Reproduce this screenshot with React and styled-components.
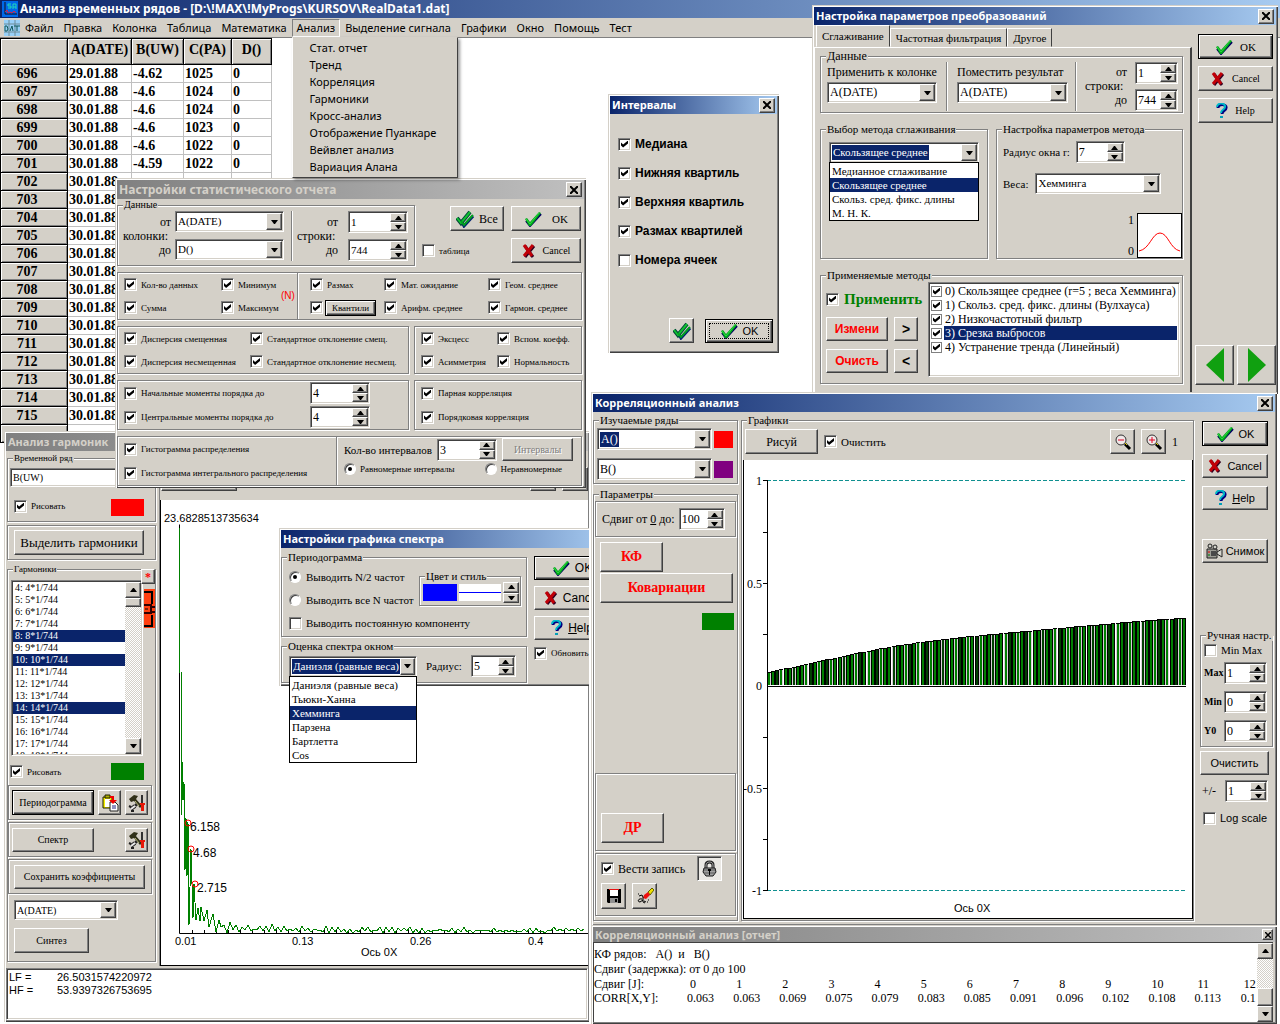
import React from 'react'
import styled, { css, createGlobalStyle } from 'styled-components'

const face = '#d4d0c8'
const shade = '#808080'
const dark = '#404040'
const navy = '#0a246a'
const serif = '"Liberation Serif", "Times New Roman", serif'
const sans = '"Liberation Sans", Arial, sans-serif'
const ui = '"Noto Sans", Tahoma, sans-serif'

const raised = css`
  border: 1px solid;
  border-color: #fff ${dark} ${dark} #fff;
  box-shadow: inset -1px -1px 0 ${shade};
`
const sunken = css`
  border: 1px solid;
  border-color: ${shade} #fff #fff ${shade};
  box-shadow: inset 1px 1px 0 ${dark}, inset -1px -1px 0 ${face};
`
const etched = css`
  border: 1px solid ${shade};
  box-shadow: 1px 1px 0 #fff, inset 1px 1px 0 #fff;
`

const GlobalStyle = createGlobalStyle`
  * { box-sizing: border-box; }
  body {
    margin: 0;
    overflow: hidden;
    background: #fff;
    color: #000;
    font: 12px/14px ${serif};
  }
  button, input, select { margin: 0; padding: 0; font: inherit; color: inherit; }
  ul { margin: 0; padding: 0; list-style: none; }
  svg { display: block; flex: none; }
`

/* ---------- icons ---------- */

const CheckIcon = () =>
  <svg width='18' height='16' viewBox='0 0 18 16' aria-hidden='true'>
    <path d='M2 10l4 5L17 3' fill='none' stroke='#000060' strokeWidth='2' />
    <path d='M1 8l2-1 3 4L15 1l2 1L7 15H5z' fill='#00a818' />
    <path d='M2 8l4 5L15 2' fill='none' stroke='#30d848' strokeWidth='1' />
  </svg>

const DoubleCheckIcon = () =>
  <svg width='18' height='18' viewBox='0 0 18 18' aria-hidden='true'>
    <path d='M5 10l3 6L17 6' fill='none' stroke='#002070' strokeWidth='3' />
    <path d='M1 8l4 5L14 2' fill='none' stroke='#004838' strokeWidth='4' />
    <path d='M1 8l4 5L14 2' fill='none' stroke='#10c030' strokeWidth='2' />
    <path d='M5 11l3 4 9-10' fill='none' stroke='#00a020' strokeWidth='2' />
  </svg>

const CrossIcon = () =>
  <svg width='14' height='14' viewBox='0 0 14 14' aria-hidden='true'>
    <path d='M3 2l8 11M12 2L3 13' fill='none' stroke='#300020' strokeWidth='3' />
    <path d='M2 1l8 11M11 1L2 12' fill='none' stroke='#c00008' strokeWidth='3' />
  </svg>

const HelpIcon = () =>
  <svg width='12' height='16' viewBox='0 0 12 16' aria-hidden='true'>
    <path d='M2 5c0-5 9-4 8 0 0 3-4 2-4 6' fill='none' stroke='#000080' strokeWidth='3' />
    <path d='M1 4c0-5 9-4 8 0 0 3-4 2-4 6' fill='none' stroke='#00b8c8' strokeWidth='2' />
    <path d='M4 13h3v2H4z' fill='#00a0b8' />
  </svg>

const CloseIcon = ({ size = 8 }) =>
  <svg width={size} height={size} viewBox='0 0 8 8' aria-hidden='true'>
    <path d='M0 0l8 8M8 0L0 8' stroke='#000' strokeWidth='2' />
  </svg>

const TriangleUp = () =>
  <svg width='7' height='4' viewBox='0 0 7 4' aria-hidden='true'><path d='M0 4L3 0h1l3 4z' /></svg>

const TriangleDown = () =>
  <svg width='7' height='4' viewBox='0 0 7 4' aria-hidden='true'><path d='M0 0h7L4 4H3z' /></svg>

const AppIcon = () =>
  <svg width='16' height='16' viewBox='0 0 16 16' aria-hidden='true'>
    <path d='M0 0h16v16H0z' fill='#0068e8' />
    <path d='M3 1v12h12' fill='none' stroke='#101020' />
    <path d='M3 11l2-2 1 3 2-1 2 1 2-2 2 2' fill='none' stroke='#e02040' />
    <path d='M9 3H6v2h3v2H6M11 8V3h3v5M11 6h3' fill='none' stroke='#20d8b8' />
  </svg>

const DataIcon = () =>
  <svg width='16' height='16' viewBox='0 0 16 16' aria-hidden='true'>
    <path d='M0 0h16v16H0z' fill='#98d0f8' />
    <path d='M5 0v16M11 0v16M0 4h16M0 12h16' stroke='#6c8c98' />
    <path d='M1 6v5h2l1-2-1-3zM6 11l2-5 1 5M10 6h6M13 6v5' fill='none' stroke='#105858' />
  </svg>

const ClipboardIcon = () =>
  <svg width='18' height='18' viewBox='0 0 18 18' aria-hidden='true'>
    <path d='M2 3h9v11H2z' fill='#f8f000' stroke='#202000' />
    <path d='M4 5h5v8H4z' fill='#fff' />
    <path d='M4 1h5v3H4z' fill='#b0b000' stroke='#202000' />
    <path d='M9 8h5l3 3v6H9z' fill='#fff' stroke='#202020' />
    <path d='M11 12h4M11 14h4' stroke='#202080' />
    <path d='M9 2h4v4h3l-4 4-4-4h3V4H9z' fill='#f00000' />
  </svg>

const ToolsIcon = () =>
  <svg width='18' height='18' viewBox='0 0 18 18' aria-hidden='true'>
    <path d='M1 5l5-4 4 1-2 3 6 7-2 2-6-7-3 1z' fill='#303018' />
    <path d='M7 7l4 5' stroke='#b8b878' />
    <path d='M3 15l4-3' stroke='#202020' strokeWidth='4' />
    <path d='M1 12l2 1M3 17l3 0M7 10l2 2' stroke='#202020' strokeWidth='2' />
    <path d='M3 15l4-3' stroke='#e8e8e8' strokeWidth='2' />
    <path d='M14 1v8' stroke='#303030' strokeWidth='2' />
    <path d='M12 9h5v2h-1v6h-3v-6h-1z' fill='#e81808' />
  </svg>

const BracketIcon = () =>
  <svg width='11' height='39' viewBox='0 0 11 39' aria-hidden='true'>
    <path d='M0 0h11v39H0z' fill='#ff4010' />
    <path d='M0 3h8v12M0 37h8V26' fill='none' stroke='#000' strokeWidth='2' />
    <path d='M0 16h7v8H0M7 18h4M7 23h4' fill='none' stroke='#300000' strokeWidth='2' />
    <path d='M1 20h3' stroke='#000' />
  </svg>

const ZoomIcon = ({ plus }) =>
  <svg width='18' height='18' viewBox='0 0 18 18' aria-hidden='true'>
    <circle cx='7' cy='7' r='5' fill='#f0e8e8' stroke='#303030' />
    <path d='M11 11l5 5' stroke='#000' strokeWidth='3' />
    <path d='M11 10l2 2' stroke='#e0d000' strokeWidth='1' />
    <path d={plus ? 'M4 7h6M7 4v6' : 'M4 7h6'} stroke='#e00020' strokeWidth='1' />
  </svg>

const CameraIcon = () =>
  <svg width='17' height='16' viewBox='0 0 17 16' aria-hidden='true'>
    <path d='M1 6h10v9H1z' fill='#9c9c94' stroke='#202020' />
    <path d='M11 9l5-3v8l-5-3z' fill='#d8d8d0' stroke='#202020' />
    <circle cx='4' cy='3' r='2' fill='#d0d0c8' stroke='#202020' />
    <circle cx='9' cy='4' r='2' fill='#d0d0c8' stroke='#202020' />
    <path d='M5 8h5v5H5z' fill='#484848' />
    <path d='M2 9h2' stroke='#e00000' />
    <path d='M2 12h2' stroke='#008000' />
  </svg>

const LockIcon = () =>
  <svg width='15' height='17' viewBox='0 0 15 17' aria-hidden='true'>
    <path d='M4 8V5c0-4 7-4 7 0v3' fill='none' stroke='#202020' strokeWidth='3' />
    <path d='M4 8V5c0-4 7-4 7 0v3' fill='none' stroke='#a8a8a8' strokeWidth='1' />
    <path d='M2 8h11l1 4-3 4H4l-3-4z' fill='#a0a0a0' stroke='#181818' />
    <path d='M2 10h11M2 13h11' stroke='#585858' />
    <path d='M6 9h3v2H8v4H7v-4H6z' fill='#000' />
  </svg>

const DiskIcon = () =>
  <svg width='16' height='16' viewBox='0 0 16 16' aria-hidden='true'>
    <path d='M1 1h14v14H2l-1-1z' fill='#000' />
    <path d='M4 1h8v7H4z' fill='#fff' />
    <path d='M3 1h10v1H3z' fill='#e81010' />
    <path d='M4 10h8v5H4z' fill='#909090' />
    <path d='M9 11h2v3H9z' fill='#000' />
  </svg>

const EraserIcon = () =>
  <svg width='18' height='18' viewBox='0 0 18 18' aria-hidden='true'>
    <path d='M12 5l4-4 2 2-4 5z' fill='#f0e000' stroke='#606000' />
    <path d='M8 8l4-3 2 3-4 4-3-1z' fill='#f01010' />
    <path d='M3 9l3-1 1 2v5l2 1M6 12c-4-1-5 3-2 3l3-2' fill='none' stroke='#000' strokeWidth='1' />
    <path d='M8 14l2 1M11 15h1M2 7h1M12 13h1' stroke='#000' />
  </svg>

/* ---------- shared parts ---------- */

const Window = styled.section`
  position: absolute;
  left: ${p => p.$x}px;
  top: ${p => p.$y}px;
  width: ${p => p.$w}px;
  min-height: ${p => p.$h || 0}px;
  display: flex;
  flex-direction: column;
  padding: 2px;
  background: ${face};
  box-shadow: inset 1px 1px 0 ${face}, inset 2px 2px 0 #fff, inset -1px -1px 0 ${dark},
    inset -2px -2px 0 ${shade}${p => p.$gutter && ', -2px 0 0 #fff'};
`

const TitleBar = styled.header`
  display: flex;
  align-items: center;
  justify-content: space-between;
  flex: none;
  height: ${p => p.$h || 18}px;
  padding: 0 2px;
  background: ${p => (p.$inactive
    ? `linear-gradient(90deg, ${shade}, #c0c0c0)`
    : `linear-gradient(90deg, ${navy}, #a6caf0)`)};
  color: ${p => (p.$inactive ? face : '#fff')};
`

const Title = styled.h2`
  margin: 0;
  font: bold ${p => p.$size || 11}px/16px ${ui};
  white-space: nowrap;
`

const CloseButton = styled.button`
  ${raised};
  display: grid;
  place-items: center;
  width: ${p => p.$s || 16}px;
  height: ${p => (p.$s || 15)}px;
  background: ${face};
`

const GroupBox = styled.fieldset`
  ${etched};
  position: relative;
  display: flex;
  flex-direction: column;
  min-width: 0;
  margin: 0;
  padding: 0;
  ${p => p.$w && `width: ${p.$w}px;`}
  ${p => p.$grow && 'flex: 1;'}
`

const GroupBody = styled.div`
  display: flex;
  flex: 1;
  min-width: 0;
  flex-direction: ${p => (p.$col ? 'column' : 'row')};
  padding: ${p => p.$pad || 0};
`

const Legend = styled.legend`
  margin-left: 5px;
  padding: 0 1px;
  background: ${face};
  font-size: ${p => p.$size || 12}px;
  line-height: 12px;
  white-space: nowrap;
`

const Group = ({ legend, size, w, grow, col, pad, children }) =>
  <GroupBox $w={w} $grow={grow}>
    <Legend $size={size}>{legend}</Legend>
    <GroupBody $col={col} $pad={pad}>{children}</GroupBody>
  </GroupBox>

const Panel = styled.div`
  ${etched};
  display: flex;
  padding: ${p => p.$pad || 0};
  align-items: ${p => p.$align || 'stretch'};
  ${p => p.$w && `width: ${p.$w}px;`}
  ${p => p.$h && `height: ${p.$h}px;`}
  ${p => p.$grow && 'flex: 1;'}
`

const Rule = styled.div`
  width: 2px;
  border-left: 1px solid ${shade};
  border-right: 1px solid #fff;
`

const Row = styled.div`
  display: flex;
  align-items: ${p => p.$align || 'center'};
  justify-content: ${p => p.$justify || 'flex-start'};
  gap: ${p => p.$gap || 0}px;
  padding: ${p => p.$pad || 0};
  ${p => p.$grow && 'flex: 1;'}
`

const Column = styled.div`
  display: flex;
  flex-direction: column;
  align-items: ${p => p.$align || 'stretch'};
  gap: ${p => p.$gap || 0}px;
  padding: ${p => p.$pad || 0};
  ${p => p.$w && `width: ${p.$w}px; flex: none;`}
  ${p => p.$grow && 'flex: 1; min-width: 0;'}
`

const Bottom = styled.div`
  display: flex;
  flex-direction: column;
  gap: 2px;
  margin-top: auto;
`

const Button = styled.button`
  ${raised};
  display: inline-flex;
  align-items: center;
  justify-content: center;
  gap: ${p => (p.$gap === undefined ? 5 : p.$gap)}px;
  flex: none;
  width: ${p => p.$w}px;
  height: ${p => p.$h || 24}px;
  background: ${face};
  color: ${p => p.$color || '#000'};
  font: ${p => (p.$bold ? 'bold ' : '')}${p => p.$size || 12}px/14px ${p => p.$font || serif};
  white-space: nowrap;
  ${p => p.$default && `
    border-color: #000;
    box-shadow: inset 1px 1px 0 #fff, inset -1px -1px 0 ${dark}, inset -2px -2px 0 ${shade};
  `}
  ${p => p.$focus && `outline: 1px dotted #000; outline-offset: -5px;`}
  ${p => p.$down && `
    border-color: ${shade} #fff #fff ${shade};
    box-shadow: inset 1px 1px 0 ${dark};
    background: #eae8e4;
  `}
  &:disabled {
    color: ${shade};
    text-shadow: 1px 1px 0 #fff;
  }
`

const Tick = styled.input`
  ${sunken};
  appearance: none;
  flex: none;
  display: grid;
  place-items: center;
  width: ${p => p.$s || 13}px;
  height: ${p => p.$s || 13}px;
  background: #fff;
  ${p => p.$flat && `border: 1px solid ${shade}; box-shadow: none;`}
  &:checked::before {
    content: '';
    width: 7px;
    height: 7px;
    background: #000;
    clip-path: polygon(0 28%, 0 70%, 30% 100%, 100% 42%, 100% 0, 30% 58%);
  }
`

const RadioInput = styled.input`
  appearance: none;
  flex: none;
  display: grid;
  place-items: center;
  width: 12px;
  height: 12px;
  border: 1px solid;
  border-color: ${shade} #fff #fff ${shade};
  border-radius: 50%;
  background: #fff;
  box-shadow: inset 1px 1px 0 ${dark};
  &:checked::before {
    content: '';
    width: 4px;
    height: 4px;
    border-radius: 50%;
    background: #000;
  }
`

const TickLabel = styled.label`
  display: flex;
  align-items: center;
  gap: ${p => p.$gap || 4}px;
  font: ${p => (p.$bold ? 'bold ' : '')}${p => p.$size || 9}px/14px ${p => p.$font || serif};
  color: ${p => p.$color || '#000'};
  white-space: nowrap;
`

const Check = ({ children, off, ...rest }) =>
  <TickLabel {...rest}>
    <Tick type='checkbox' defaultChecked={!off} />
    {children}
  </TickLabel>

const Radio = ({ children, on, name, ...rest }) =>
  <TickLabel {...rest}>
    <RadioInput type='radio' name={name} defaultChecked={on} />
    {children}
  </TickLabel>

const ComboBox = styled.div`
  ${sunken};
  position: relative;
  display: flex;
  align-items: center;
  flex: ${p => (p.$w ? 'none' : 1)};
  width: ${p => (p.$w ? `${p.$w}px` : 'auto')};
  height: ${p => p.$h || 21}px;
  padding: 1px;
  background: #fff;
  font-size: ${p => p.$size || 12}px;
`

const ComboSelect = styled.select`
  appearance: none;
  flex: 1;
  min-width: 0;
  height: 15px;
  padding: 0 1px;
  border: 0;
  outline: 0;
  background: transparent;
  line-height: 15px;
  ${p => p.$marked && `
    flex: none;
    field-sizing: content;
    margin-left: 1px;
    padding: 0 1px;
    background: ${navy};
    color: #fff;
  `}
`

const ComboArrow = styled.span`
  ${raised};
  display: grid;
  place-items: center;
  align-self: stretch;
  width: 16px;
  margin-left: auto;
  background: ${face};
  pointer-events: none;
`

const Combo = ({ w, h, size, id, label, value, options = [], marked, children }) =>
  <ComboBox $w={w} $h={h} $size={size}>
    <ComboSelect id={id} aria-label={label} defaultValue={value} $marked={marked}>
      {(options.length ? options : [value]).map(o => <option key={o}>{o}</option>)}
    </ComboSelect>
    <ComboArrow><TriangleDown /></ComboArrow>
    {children}
  </ComboBox>

const DropList = styled.ul`
  position: absolute;
  z-index: 2;
  left: -1px;
  right: -1px;
  top: 100%;
  padding: 1px 0 0;
  border: 1px solid #000;
  background: #fff;
`

const DropItem = styled.li`
  height: 14px;
  padding: 0 2px;
  line-height: 14px;
  white-space: nowrap;
  ${p => p.$on && `background: ${navy}; color: #fff;`}
`

const Options = ({ items, current }) =>
  <DropList role='listbox'>
    {items.map(i =>
      <DropItem key={i} role='option' aria-selected={i === current} $on={i === current}>{i}</DropItem>
    )}
  </DropList>

const SpinBox = styled.div`
  ${sunken};
  display: flex;
  flex: none;
  width: ${p => p.$w || 60}px;
  height: 22px;
  padding: 1px;
  background: #fff;
`

const SpinInput = styled.input`
  flex: 1;
  min-width: 0;
  width: 0;
  padding-left: 1px;
  border: 0;
  outline: 0;
  background: transparent;
  font-size: ${p => p.$size || 12}px;
`

const Arrows = styled.div`
  display: grid;
  grid-template-rows: 1fr 1fr;
  width: 16px;
  height: ${p => (p.$h ? `${p.$h}px` : 'auto')};
`

const ArrowButton = styled.button`
  ${raised};
  display: grid;
  place-items: center;
  min-height: 0;
  background: ${face};
`

const SpinArrows = ({ h }) =>
  <Arrows $h={h}>
    <ArrowButton aria-label='Больше'><TriangleUp /></ArrowButton>
    <ArrowButton aria-label='Меньше'><TriangleDown /></ArrowButton>
  </Arrows>

const Spin = ({ w, id, label, value, size }) =>
  <SpinBox $w={w}>
    <SpinInput id={id} aria-label={label} defaultValue={value} $size={size} />
    <SpinArrows />
  </SpinBox>

const RangeLabels = styled.div`
  display: flex;
  flex-direction: column;
  padding-top: ${p => p.$top || 0}px;
  width: ${p => p.$w}px;
  line-height: 14px;
  label { text-align: right; }
`

const Range = ({ id, title, w, top }) =>
  <RangeLabels $w={w} $top={top}>
    <label htmlFor={`${id}-from`}>от</label>
    <span>{title}</span>
    <label htmlFor={`${id}-to`}>до</label>
  </RangeLabels>

const Swatch = styled.button`
  flex: none;
  width: ${p => p.$w || 33}px;
  height: 17px;
  border: 0;
  background: ${p => p.$color};
`

const ScrollBar = styled.div`
  display: flex;
  flex-direction: column;
  flex: none;
  width: 16px;
  background: repeating-conic-gradient(#fff 0 25%, ${face} 0 50%) 0 0 / 2px 2px;
`

const ScrollButton = styled.button`
  ${raised};
  display: grid;
  place-items: center;
  flex: none;
  height: ${p => p.$h || 16}px;
  margin-top: ${p => (p.$end ? 'auto' : 0)};
  background: ${face};
`

const ChartText = styled.text`
  font: ${p => p.$size || 11}px ${p => p.$font || sans};
`

/* ---------- main window ---------- */

const Desktop = styled.main`
  position: relative;
  height: 100vh;
  overflow: hidden;
  background: #fff;
`

const AppTitle = styled(TitleBar)`
  justify-content: flex-start;
  gap: 2px;
`

const MenuBar = styled.nav`
  position: relative;
  display: flex;
  align-items: center;
  height: 20px;
  padding-left: 4px;
  border-bottom: 1px solid ${shade};
  background: ${face};
  font: 11px/14px ${ui};
`

const MenuItem = styled.div`
  position: relative;
`

const MenuButton = styled.button`
  height: 18px;
  padding: 0 4px;
  border: 1px solid;
  border-color: ${p => (p.$open ? `${shade} #fff #fff ${shade}` : 'transparent')};
  background: transparent;
  white-space: nowrap;
`

const Popup = styled.ul`
  position: absolute;
  z-index: 1;
  left: 0;
  top: 100%;
  width: 166px;
  padding: 1px 2px 2px;
  background: ${face};
  border: 1px solid;
  border-color: ${face} ${dark} ${dark} #fff;
  box-shadow: 2px 2px 3px rgba(0, 0, 0, 0.4);
  li {
    height: 17px;
    padding-left: 15px;
    line-height: 17px;
    white-space: nowrap;
  }
`

const menus = [
  'Файл', 'Правка', 'Колонка', 'Таблица', 'Математика', 'Анализ',
  'Выделение сигнала', 'Графики', 'Окно', 'Помощь', 'Тест',
]
const analysis = [
  'Стат. отчет', 'Тренд', 'Корреляция', 'Гармоники', 'Кросс-анализ',
  'Отображение Пуанкаре', 'Вейвлет анализ', 'Вариация Алана',
]

const Sheet = styled.table`
  table-layout: fixed;
  width: 271px;
  border-collapse: collapse;
  font: bold 14px/16px ${serif};
  th {
    border: 1px solid #000;
    background: ${face};
    box-shadow: inset 1px 1px 0 #fff, inset -1px -1px 0 ${shade};
    padding: 0 0 3px;
  }
  thead th { height: 26px; }
  tbody th {
    height: 18px;
    padding: 0 14px 0 0;
  }
  td {
    height: 18px;
    padding: 0 1px;
    border: 1px solid #c0c0c0;
    overflow: hidden;
    white-space: nowrap;
  }
`

const readings = [
  ['29.01.88', '-4.62', '1025'],
  ['30.01.88', '-4.6', '1024'],
  ['30.01.88', '-4.6', '1024'],
  ['30.01.88', '-4.6', '1023'],
  ['30.01.88', '-4.6', '1022'],
  ['30.01.88', '-4.59', '1022'],
]

const DataSheet = () =>
  <Sheet>
    <colgroup>
      <col width='67' /><col width='64' /><col width='52' /><col width='48' /><col width='40' />
    </colgroup>
    <thead>
      <tr><th /><th>A(DATE)</th><th>B(UW)</th><th>C(PA)</th><th>D()</th></tr>
    </thead>
    <tbody>
      {Array.from({ length: 20 }, (_, i) => {
        const [date, uw, pa] = readings[i] || ['30.01.88', '', '']
        return (
          <tr key={i}>
            <th scope='row'>{696 + i}</th><td>{date}</td><td>{uw}</td><td>{pa}</td><td>{uw && '0'}</td>
          </tr>
        )
      })}
      <tr><th /><td /><td /><td /><td /></tr>
    </tbody>
  </Sheet>

/* ---------- statistics dialog ---------- */

const CheckGrid = styled.div`
  display: grid;
  grid-template-columns: ${p => p.$cols};
  grid-template-rows: 1fr 1fr;
  align-items: center;
  padding-left: ${p => p.$left || 6}px;
  ${p => p.$grow && 'flex: 1;'}
`

const CountMark = styled.span`
  grid-column: 3;
  grid-row: 1 / 3;
  color: #f00;
  font: 10px/12px ${sans};
`

const ActionGrid = styled.div`
  display: grid;
  grid-template-columns: 1fr 70px;
  flex: 1;
  gap: 7px;
  padding: 7px 1px 0 7px;
  align-content: start;
  align-items: center;
`

const SmallLabel = styled.label`
  font-size: 11px;
`

const StatDialog = () =>
  <Window $x={115} $y={178} $w={471} $h={310}>
    <TitleBar $inactive $h={19}>
      <Title $size={12}>Настройки статистического отчета</Title>
      <CloseButton aria-label='Закрыть'><CloseIcon /></CloseButton>
    </TitleBar>
    <Column $gap={6} $pad='0 2px 0 0'>
      <Row $align='stretch'>
        <Group legend='Данные' size={10} w={298} pad='0 0 4px 5px'>
          <Range id='col' title='колонки:' w={48} top={4} />
          <Column $gap={7} $w={120} $pad='0 7px 0 4px'>
            <Row><Combo id='col-from' value='A(DATE)' size={11} /></Row>
            <Row><Combo id='col-to' value='D()' size={11} /></Row>
          </Column>
          <Rule />
          <Column $pad='0 0 0 4px'><Range id='row' title='строки:' w={41} top={4} /></Column>
          <Column $gap={6} $pad='0 0 0 10px'>
            <Spin id='row-from' value='1' size={11} />
            <Spin id='row-to' value='744' size={11} />
          </Column>
        </Group>
        <ActionGrid>
          <Row $justify='flex-end'><Button $w={54} $h={25}><DoubleCheckIcon />Все</Button></Row>
          <Button $w={70} $h={25} $size={11} $gap={10}><CheckIcon />OK</Button>
          <Check off>таблица</Check>
          <Button $w={70} $h={25} $size={10} $gap={7}><CrossIcon />Cancel</Button>
        </ActionGrid>
      </Row>
      <Panel $h={48}>
        <CheckGrid $cols='97px 60px 16px'>
          <Check>Кол-во данных</Check>
          <Check>Минимум</Check>
          <CountMark>(N)</CountMark>
          <Check>Сумма</Check>
          <Check>Максимум</Check>
        </CheckGrid>
        <Rule />
        <CheckGrid $cols='74px 104px 1fr' $left={11} $grow>
          <Check>Размах</Check>
          <Check>Мат. ожидание</Check>
          <Check>Геом. среднее</Check>
          <Row $gap={2}>
            <Tick type='checkbox' defaultChecked aria-label='Квантили' />
            <Button $default $w={51} $h={16} $size={9}>Квантили</Button>
          </Row>
          <Check>Арифм. среднее</Check>
          <Check>Гармон. среднее</Check>
        </CheckGrid>
      </Panel>
      <Row $gap={5}>
        <Panel $w={292} $h={48}>
          <CheckGrid $cols='126px 1fr' $grow>
            <Check>Дисперсия смещенная</Check>
            <Check>Стандартное отклонение смещ.</Check>
            <Check>Дисперсия несмещенная</Check>
            <Check>Стандартное отклонение несмещ.</Check>
          </CheckGrid>
        </Panel>
        <Panel $grow $h={48}>
          <CheckGrid $cols='76px 1fr' $grow>
            <Check>Эксцесс</Check>
            <Check>Вспом. коефф.</Check>
            <Check>Асимметрия</Check>
            <Check>Нормальность</Check>
          </CheckGrid>
        </Panel>
      </Row>
      <Row $gap={5}>
        <Panel $w={292} $h={50}>
          <CheckGrid $cols='186px 1fr' $grow>
            <Check>Начальные моменты порядка до</Check>
            <Spin label='Начальные моменты' value='4' />
            <Check>Центральные моменты порядка до</Check>
            <Spin label='Центральные моменты' value='4' />
          </CheckGrid>
        </Panel>
        <Panel $grow $h={50}>
          <CheckGrid $cols='1fr' $grow>
            <Check>Парная корреляция</Check>
            <Check>Порядковая корреляция</Check>
          </CheckGrid>
        </Panel>
      </Row>
      <Panel $h={50}>
        <CheckGrid $cols='212px'>
          <Check>Гистограмма распределения</Check>
          <Check>Гистограмма интегрального распределения</Check>
        </CheckGrid>
        <Rule />
        <Column $grow $gap={1} $pad='1px 8px 0 6px'>
          <Row $justify='space-between'>
            <SmallLabel htmlFor='intervals'>Кол-во интервалов</SmallLabel>
            <Spin id='intervals' value='3' />
            <Button $w={71} $h={23} $size={10} disabled>Интервалы</Button>
          </Row>
          <Row $gap={30}>
            <Radio name='step' on>Равномерные интервалы</Radio>
            <Radio name='step'>Неравномерные</Radio>
          </Row>
        </Column>
      </Panel>
    </Column>
  </Window>

/* ---------- intervals dialog ---------- */

const IntervalsDialog = () =>
  <Window $x={608} $y={94} $w={171} $h={259}>
    <TitleBar>
      <Title>Интервалы</Title>
      <CloseButton aria-label='Закрыть'><CloseIcon /></CloseButton>
    </TitleBar>
    <Column $gap={15} $pad='23px 0 0 8px'>
      {['Медиана', 'Нижняя квартиль', 'Верхняя квартиль', 'Размах квартилей'].map(t =>
        <Check key={t} $bold $size={12} $font={sans}>{t}</Check>
      )}
      <Check off $bold $size={12} $font={sans}>Номера ячеек</Check>
    </Column>
    <Bottom>
      <Row $gap={11} $justify='flex-end' $pad='0 4px 8px 0'>
        <Button $w={25} $h={25} aria-label='Отметить все'><DoubleCheckIcon /></Button>
        <Button $default $focus $w={68} $h={24} $size={11} $font={sans}><CheckIcon />OK</Button>
      </Row>
    </Bottom>
  </Window>

/* ---------- transform parameters ---------- */

const TabStrip = styled.div`
  display: flex;
  align-items: flex-end;
  height: 22px;
  padding-left: 2px;
`

const Tab = styled.button`
  height: ${p => (p.$on ? 22 : 19)}px;
  padding: 0 5px;
  border: 1px solid;
  border-color: #fff ${dark} transparent #fff;
  background: ${face};
  font-size: 11px;
  white-space: nowrap;
`

const TabPage = styled.div`
  display: flex;
  flex-direction: column;
  gap: 10px;
  flex: 1;
  padding: 2px 7px 0 5px;
  border-top: 1px solid #fff;
  border-left: 1px solid #fff;
  border-right: 2px solid ${dark};
`

const MethodList = styled.ul`
  ${sunken};
  flex: 1;
  height: 95px;
  margin-top: 1px;
  padding: 1px 2px;
  background: #fff;
  label {
    display: flex;
    align-items: center;
    gap: 2px;
    height: 14px;
    white-space: nowrap;
  }
`

const MethodText = styled.span`
  flex: 1;
  padding-left: 1px;
  ${p => p.$on && `background: ${navy}; color: #fff;`}
`

const methods = [
  '0) Скользящее среднее (r=5 ; веса Хемминга)',
  '1) Скольз. сред. фикс. длины (Вулхауса)',
  '2) Низкочастотный фильтр',
  '3) Срезка выбросов',
  '4) Устранение тренда (Линейный)',
]
const smoothing = ['Медианное сглаживание', 'Скользящее среднее', 'Скольз. сред. фикс. длины', 'М. Н. К.']

const PreviewLabels = styled.div`
  display: flex;
  flex-direction: column;
  justify-content: space-between;
  height: 45px;
`

const Preview = styled.svg`
  border: 1px solid #000;
  background: #fff;
`

const NavRow = styled.div`
  display: flex;
  gap: 3px;
  margin-top: auto;
  padding-bottom: 7px;
`

const ParamsDialog = () =>
  <Window $x={812} $y={5} $w={466} $h={389}>
    <TitleBar>
      <Title>Настройка параметров преобразований</Title>
      <CloseButton aria-label='Закрыть'><CloseIcon /></CloseButton>
    </TitleBar>
    <Row $align='stretch' $grow>
      <Column $w={378}>
        <TabStrip role='tablist'>
          <Tab role='tab' aria-selected='true' $on>Сглаживание</Tab>
          <Tab role='tab'>Частотная фильтрация</Tab>
          <Tab role='tab'>Другое</Tab>
        </TabStrip>
        <TabPage>
          <Group legend='Данные' pad='0 0 1px'>
            <Column $w={125} $gap={3} $pad='3px 9px 0 6px'>
              <label htmlFor='apply-col'>Применить к колонке</label>
              <Combo id='apply-col' w={110} value='A(DATE)' />
            </Column>
            <Rule />
            <Column $w={127} $gap={3} $pad='3px 7px 0 9px'>
              <label htmlFor='result-col'>Поместить результат</label>
              <Combo id='result-col' w={111} value='A(DATE)' />
            </Column>
            <Rule />
            <Column $pad='0 8px'><Range id='line' title='строки:' w={42} top={3} /></Column>
            <Column $gap={5}>
              <Spin w={43} id='line-from' value='1' />
              <Spin w={43} id='line-to' value='744' />
            </Column>
          </Group>
          <Row $gap={8} $align='stretch'>
            <Group legend='Выбор метода сглаживания' size={11} w={168} pad='7px 8px 95px'>
              <Combo label='Метод' value='Скользящее среднее' size={11} options={smoothing} marked>
                <Options items={smoothing} current='Скользящее среднее' />
              </Combo>
            </Group>
            <Group legend='Настройка параметров метода' size={11} grow col pad='6px 0 0 6px'>
              <Row $gap={6}>
                <SmallLabel htmlFor='radius'>Радиус окна r:</SmallLabel>
                <Spin w={49} id='radius' value='7' />
              </Row>
              <Row $gap={7} $pad='10px 21px 0 0'>
                <SmallLabel htmlFor='weight'>Веса:</SmallLabel>
                <Combo id='weight' size={11} value='Хемминга' />
              </Row>
              <Bottom>
                <Row $gap={3} $justify='flex-end'>
                  <PreviewLabels><span>1</span><span>0</span></PreviewLabels>
                  <Preview width='45' height='45' viewBox='0 0 43 43'>
                    <path d='M1 37C12 35 14 19 22 19S32 35 42 37' fill='none' stroke='#f00' />
                  </Preview>
                </Row>
              </Bottom>
            </Group>
          </Row>
          <Group legend='Применяемые методы' size={11} pad='0 2px 6px 5px'>
            <Column $w={102} $gap={8}>
              <Row $pad='11px 0 3px'>
                <Check $bold $size={15} $gap={5} $color='#008000'>Применить</Check>
              </Row>
              <Row $gap={6}>
                <Button $w={62} $h={24} $bold $font={sans} $color='#f00'>Измени</Button>
                <Button $w={24} $h={24} $bold $font={sans} $size={14}>&gt;</Button>
              </Row>
              <Row $gap={6}>
                <Button $w={62} $h={24} $bold $font={sans} $color='#f00'>Очисть</Button>
                <Button $w={24} $h={24} $bold $font={sans} $size={14}>&lt;</Button>
              </Row>
            </Column>
            <MethodList>
              {methods.map((m, i) =>
                <li key={m}>
                  <label>
                    <Tick type='checkbox' $s={11} $flat defaultChecked />
                    <MethodText $on={i === 3}>{m}</MethodText>
                  </label>
                </li>
              )}
            </MethodList>
          </Group>
        </TabPage>
      </Column>
      <Column $grow $gap={7} $align='center' $pad='9px 0 0 3px'>
        <Button $default $w={75} $h={25} $size={11} $gap={7}><CheckIcon />OK</Button>
        <Button $w={75} $h={25} $size={10} $gap={7}><CrossIcon />Cancel</Button>
        <Button $w={75} $h={25} $size={10} $gap={7}><HelpIcon />Help</Button>
        <NavRow>
          <Button $w={39} $h={40} aria-label='Назад'>
            <svg width='18' height='34' viewBox='0 0 18 34'><path d='M18 0v34L0 17z' fill='#10a010' /></svg>
          </Button>
          <Button $w={39} $h={40} aria-label='Вперед'>
            <svg width='18' height='34' viewBox='0 0 18 34'><path d='M0 0v34l18-17z' fill='#10a010' /></svg>
          </Button>
        </NavRow>
      </Column>
    </Row>
  </Window>

/* ---------- harmonics window ---------- */

const StarButton = styled(Button)`
  position: absolute;
  right: 0;
  top: -6px;
`

const HarmonicRow = styled.div`
  display: flex;
  align-items: flex-start;
  gap: 1px;
  padding: 5px 0 0 3px;
  svg { margin-top: 9px; }
  button svg { margin-top: 0; }
`

const HarmonicBox = styled.div`
  ${sunken};
  display: flex;
  width: 132px;
  height: 176px;
  padding: 1px;
  background: #fff;
`

const HarmonicList = styled.ul`
  flex: 1;
  overflow: hidden;
  font-size: 10px;
`

const HarmonicItem = styled.li`
  height: 12px;
  padding-left: 2px;
  line-height: 12px;
  ${p => p.$on && `background: ${navy}; color: #fff;`}
`

const SideToolbar = styled.div`
  display: flex;
  align-items: flex-end;
  gap: 6px;
  height: 49px;
  padding: 0 0 9px 1px;
  button:first-child { margin-right: auto; }
`

const ChartPane = styled.div`
  display: flex;
  flex-direction: column;
  flex: 1;
  min-width: 0;
  border-left: 1px solid ${shade};
`

const ChartCanvas = styled.div`
  flex: 1;
  border-left: 1px solid #000;
  border-bottom: 1px solid #000;
  background: #fff;
  overflow: hidden;
`

const Memo = styled.dl`
  ${sunken};
  display: grid;
  grid-template-columns: 48px 1fr;
  align-content: start;
  height: 52px;
  margin: 2px 0 0;
  padding: 2px;
  background: #fff;
  font: 11px/13px ${sans};
  dd { margin: 0; }
`

// head of the spectrum, then a decaying tail
const spectrumHead = [
  [20, 172], [20, 315], [21, 262], [22, 300], [23, 282], [24, 370], [25, 318], [26, 376], [27, 322],
  [28, 425], [30, 349], [32, 418], [33, 384], [35, 420], [37, 408], [39, 421], [40, 407],
  [43, 421], [46, 410], [48, 427], [52, 414], [55, 432], [58, 420], [60, 427], [63, 425],
]
const spectrumTail = Array.from({ length: 120 }, (_, i) => {
  const lift = 6 + 6 * Math.exp(-i / 20)
  const noise = Math.abs(Math.sin(i * 12.9898) * 43.5453) % 1
  return [66 + i * 3, Math.round(433 - (i % 2 ? lift * (0.4 + noise * 0.6) : lift * noise * 0.4))]
})
const spectrum = [...spectrumHead, ...spectrumTail].map(p => p.join(',')).join(' ')
const peaks = [[27, 323, '6.158'], [30, 349, '4.68'], [34, 384, '2.715']]
const marked = [8, 10, 14]

const SpectrumChart = () =>
  <svg width='428' height='461' viewBox='0 0 428 461'>
    <path d='M18 25v409h410' fill='none' stroke='#000' transform='translate(.5 -.5)' />
    {Array.from({ length: 34 }, (_, i) =>
      <path key={i} d={`M${31 + i * 12} 430v4`} stroke='#000' shapeRendering='crispEdges' />
    )}
    <path d='M18 28h1v145h-1z' fill='#008000' />
    <polyline points={spectrum} fill='none' stroke='#008000' shapeRendering='crispEdges' />
    {peaks.map(([x, y, t]) =>
      <g key={t}>
        <circle cx={x} cy={y} r='3' fill='none' stroke='#f00' />
        <ChartText $size={12} x={x + 2} y={y + 8}>{t}</ChartText>
      </g>
    )}
    <ChartText x='3' y='22'>23.6828513735634</ChartText>
    {[[14, '0.01'], [131, '0.13'], [249, '0.26'], [367, '0.4']].map(([x, t]) =>
      <ChartText key={t} x={x} y='445'>{t}</ChartText>
    )}
    <ChartText x='200' y='456'>Ось 0X</ChartText>
  </svg>

const HarmonicsWindow = () =>
  <Window $x={4} $y={431} $w={586} $h={591}>
    <TitleBar $inactive><Title>Анализ гармоник</Title></TitleBar>
    <Row $align='stretch' $grow>
      <Column $w={150} $gap={3} $pad='1px 0 0 1px'>
        <Group legend='Временной ряд' size={9} col pad='4px 11px 5px 2px'>
          <Row><Combo label='Временной ряд' h={19} size={10} value='B(UW)' /></Row>
          <Row $justify='space-between' $align='flex-start' $pad='12px 0 0 4px'>
            <Check>Рисовать</Check>
            <Swatch $color='#f00' aria-label='Цвет ряда' />
          </Row>
        </Group>
        <Panel $pad='4px 6px' $h={35}>
          <Button $w={130} $h={25} $size={13}>Выделить гармоники</Button>
        </Panel>
        <Group legend='Гармоники' size={9} col>
          <StarButton $w={14} $h={15} $bold $color='#f00'>*</StarButton>
          <HarmonicRow>
            <HarmonicBox>
              <HarmonicList role='listbox' aria-label='Гармоники'>
                {Array.from({ length: 15 }, (_, i) => i + 4).map(n =>
                  <HarmonicItem key={n} role='option' $on={marked.includes(n)}>{`${n}: ${n}*1/744`}</HarmonicItem>
                )}
              </HarmonicList>
              <ScrollBar>
                <ScrollButton aria-label='Вверх'><TriangleUp /></ScrollButton>
                <ScrollButton $h={9} aria-label='Ползунок' />
                <ScrollButton $end aria-label='Вниз'><TriangleDown /></ScrollButton>
              </ScrollBar>
            </HarmonicBox>
            <BracketIcon />
          </HarmonicRow>
          <Row $justify='space-between' $pad='7px 11px 5px 2px'>
            <Check>Рисовать</Check>
            <Swatch $color='#008000' aria-label='Цвет гармоник' />
          </Row>
          <Column $w={144} $gap={2}>
            <Panel $h={35} $align='center' $pad='0 3px'>
              <Row $gap={4}>
                <Button $default $w={82} $h={25} $size={10}>Периодограмма</Button>
                <Button $w={23} $h={25} aria-label='Копировать'><ClipboardIcon /></Button>
                <Button $w={23} $h={25} aria-label='Настройка периодограммы'><ToolsIcon /></Button>
              </Row>
            </Panel>
            <Panel $h={35} $align='center' $pad='0 3px'>
              <Row $gap={31}>
                <Button $w={82} $h={24} $size={10}>Спектр</Button>
                <Button $w={23} $h={24} aria-label='Настройка спектра'><ToolsIcon /></Button>
              </Row>
            </Panel>
            <Panel $h={35} $align='center' $pad='0 5px'>
              <Button $w={131} $h={24} $size={10}>Сохранить коэффициенты</Button>
            </Panel>
          </Column>
          <Column $gap={8} $align='flex-start' $pad='6px 0 8px 6px'>
            <Combo label='Колонка результата' w={104} h={20} size={10} value='A(DATE)' />
            <Button $w={75} $h={25} $size={10}>Синтез</Button>
          </Column>
        </Group>
      </Column>
      <Column $w={3} />
      <ChartPane>
        <SideToolbar>
          <Button $w={76} $h={24} aria-label='Рисуй' />
          <Button $w={26} $h={24} aria-label='Уменьшить' />
          <Button $w={26} $h={24} aria-label='Увеличить' />
        </SideToolbar>
        <ChartCanvas><SpectrumChart /></ChartCanvas>
      </ChartPane>
    </Row>
    <Memo>
      <dt>LF =</dt><dd>26.5031574220972</dd>
      <dt>HF =</dt><dd>53.9397326753695</dd>
    </Memo>
  </Window>

/* ---------- spectrum settings ---------- */

const LineSample = styled.div`
  display: flex;
  align-items: center;
  width: 42px;
  height: 17px;
  background: #fff;
  &::before {
    content: '';
    flex: 1;
    height: 1px;
    background: #00f;
  }
`

const PeriodogramGrid = styled.div`
  display: grid;
  grid-template-columns: 1fr 102px;
  grid-template-rows: auto auto auto;
  flex: 1;
  row-gap: 9px;
  padding: 7px 5px 6px 7px;
  & > :nth-child(2) { grid-area: 1 / 2 / 3 / 3; align-self: start; }
  & > :last-child { grid-column: 1 / 3; }
`

const kernels = ['Даниэля (равные веса)', 'Тьюки-Ханна', 'Хемминга', 'Парзена', 'Бартлетта', 'Cos']

const SpectrumDialog = () =>
  <Window $x={279} $y={528} $w={330} $h={158}>
    <TitleBar><Title>Настройки графика спектра</Title></TitleBar>
    <Row $align='stretch' $gap={7}>
      <Column $w={246} $gap={3} $pad='3px 0 0'>
        <Group legend='Периодограмма' size={11}>
          <PeriodogramGrid>
            <Radio name='freq' on $size={11} $gap={5}>Выводить N/2 частот</Radio>
            <Group legend='Цвет и стиль' size={11} pad='0 1px 2px 3px'>
              <Row $gap={2}>
                <Swatch $w={34} $color='#00f' aria-label='Цвет' />
                <LineSample />
                <SpinArrows h={21} />
              </Row>
            </Group>
            <Radio name='freq' $size={11} $gap={5}>Выводить все N частот</Radio>
            <Check off $size={11}>Выводить постоянную компоненту</Check>
          </PeriodogramGrid>
        </Group>
        <Group legend='Оценка спектра окном' size={11} pad='3px 9px 5px 7px'>
          <Row $gap={9}>
            <Combo label='Окно' w={128} size={11} value={kernels[0]} options={kernels} marked>
              <Options items={kernels} current='Хемминга' />
            </Combo>
            <SmallLabel htmlFor='kernel-radius'>Радиус:</SmallLabel>
            <Spin w={45} id='kernel-radius' value='5' />
          </Row>
        </Group>
      </Column>
      <Column $gap={6} $align='flex-start' $pad='8px 0 0'>
        <Button $default $w={76} $h={24} $font={sans}><CheckIcon />OK</Button>
        <Button $w={76} $h={24} $font={sans}><CrossIcon />Cancel</Button>
        <Button $w={76} $h={24} $font={sans}><HelpIcon /><span><u>H</u>elp</span></Button>
        <Check>Обновить</Check>
      </Column>
    </Row>
  </Window>

/* ---------- correlation window ---------- */

const anchors = [[0, 13], [8, 20], [20, 31], [30, 39], [42, 46], [54, 51], [78, 60], [92, 65], [100, 67]]

const heightAt = i => {
  const n = anchors.findIndex(a => a[0] >= i)
  if (n < 1) return anchors[0][1]
  const [x0, y0] = anchors[n - 1]
  const [x1, y1] = anchors[n]
  return y0 + (y1 - y0) * (i - x0) / (x1 - x0)
}

const bars = Array.from({ length: 101 }, (_, i) => ({
  x: Math.round(23 + i * 4.15),
  h: Math.round(heightAt(i)),
}))

const levels = [[20, '1'], [123, '0.5'], [225, '0'], [328, '-0.5'], [430, '-1']]

const CorrelationChart = () =>
  <svg width='450' height='458' viewBox='0 0 450 458' shapeRendering='crispEdges'>
    <path d='M23 20h419v1H23zM23 430h419v1H23z' fill='#fff' />
    <path d='M23 20h419M23 430h419' stroke='#109090' strokeDasharray='4 2' />
    {bars.map(({ x, h }, i) =>
      <g key={x}>
        <path d={`M${x} ${225 - h}h4v${h}h-4z`} fill={i % 3 ? '#000' : '#d8d0d8'} />
        <path d={`M${x + 1} ${226 - h}h2v${h - 1}h-2z`} fill={i % 4 === 2 ? '#004000' : '#008000'} />
        <path d={`M${x} ${225 - h}h4v1h-4z`} />
      </g>
    )}
    <path d='M23 20v411M23 226h419' stroke='#000' fill='none' />
    <path d='M19 72h4M19 123h4M19 174h4M19 277h4M19 328h4M19 379h4M19 430h4M19 20h4' stroke='#000' />
    {levels.map(([y, t]) =>
      <ChartText key={t} $size={12} $font={serif} x='18' y={y + 5} textAnchor='end'>{t}</ChartText>
    )}
    <ChartText x='210' y='452'>Ось 0X</ChartText>
  </svg>

const CorrelationCanvas = styled(ChartCanvas)`
  border-right: 1px solid #000;
`

const ToolRow = styled.div`
  display: flex;
  align-items: center;
  gap: 6px;
  height: 34px;
  padding: 0 15px 3px 2px;
  label { flex: 1; }
`

const ManualGrid = styled.div`
  display: grid;
  grid-template-columns: 20px 1fr;
  align-items: center;
  gap: 7px 0;
  padding: 5px 0 4px;
  label {
    font-weight: bold;
    font-size: 10px;
  }
`

const CorrelationWindow = () =>
  <Window $x={591} $y={392} $w={686} $h={533} $gutter>
    <TitleBar>
      <Title>Корреляционный анализ</Title>
      <CloseButton aria-label='Закрыть'><CloseIcon /></CloseButton>
    </TitleBar>
    <Row $align='stretch' $gap={3} $pad='2px 2px 3px 0' $grow>
      <Column $w={145} $gap={4}>
        <Group legend='Изучаемые ряды' size={11} col pad='2px 3px 3px'>
          <Row $gap={2}>
            <Combo label='Ряд X' w={115} h={22} value='A()' marked />
            <Swatch $w={19} $color='#f00' aria-label='Цвет X' />
          </Row>
          <Row $gap={2} $pad='8px 0 0'>
            <Combo label='Ряд Y' w={115} h={22} value='B()' />
            <Swatch $w={19} $color='#800080' aria-label='Цвет Y' />
          </Row>
        </Group>
        <Group legend='Параметры' size={11} col grow pad='1px 1px 4px'>
          <Panel $h={36} $align='center' $pad='0 6px'>
            <Row $gap={4}>
              <label htmlFor='shift'>Сдвиг от <u>0</u> до:</label>
              <Spin w={46} id='shift' value='100' />
            </Row>
          </Panel>
          <Column $gap={1} $align='flex-start' $pad='5px 0 0 5px'>
            <Button $w={63} $h={30} $bold $size={14} $color='#f00'>КФ</Button>
            <Button $w={133} $h={30} $bold $size={14} $color='#f00'>Ковариации</Button>
          </Column>
          <Row $justify='flex-end' $pad='10px 2px 0 0'>
            <Swatch $w={32} $color='#008000' aria-label='Цвет графика' />
          </Row>
          <Bottom>
            <Panel $h={78} $align='flex-end' $pad='0 5px 7px'>
              <Button $w={63} $h={30} $bold $size={14} $color='#f00'>ДР</Button>
            </Panel>
            <Panel $h={63} $pad='2px 5px'>
              <Column $gap={2} $grow>
                <Row $gap={12}>
                  <Check $size={12}>Вести запись</Check>
                  <Button $down $w={25} $h={25} aria-label='Блокировка'><LockIcon /></Button>
                </Row>
                <Row $gap={6}>
                  <Button $w={25} $h={26} aria-label='Сохранить'><DiskIcon /></Button>
                  <Button $w={25} $h={26} aria-label='Стереть'><EraserIcon /></Button>
                </Row>
              </Column>
            </Panel>
          </Bottom>
        </Group>
      </Column>
      <Group legend='Графики' size={11} col grow pad='0 0 1px 1px'>
        <ToolRow>
          <Button $w={73} $h={25}>Рисуй</Button>
          <Check $size={11}>Очистить</Check>
          <Button $w={25} $h={25} aria-label='Уменьшить'><ZoomIcon /></Button>
          <Button $w={25} $h={25} aria-label='Увеличить'><ZoomIcon plus /></Button>
          <span>1</span>
        </ToolRow>
        <CorrelationCanvas><CorrelationChart /></CorrelationCanvas>
      </Group>
      <Column $w={76} $gap={8} $pad='7px 0 0 3px'>
        <Column $gap={8} $pad='0 0 0 2px'>
          <Button $default $w={66} $h={25} $size={11} $font={sans}><CheckIcon />OK</Button>
          <Button $w={66} $h={24} $size={11} $font={sans}><CrossIcon />Cancel</Button>
          <Button $w={66} $h={24} $size={11} $font={sans}><HelpIcon /><span><u>H</u>elp</span></Button>
          <Row $pad='21px 0 58px'>
            <Button $w={66} $h={24} $size={11} $gap={3} $font={sans}><CameraIcon />Снимок</Button>
          </Row>
        </Column>
        <Column $gap={4} $w={73}>
          <Group legend='Ручная настр.' size={11} col pad='2px 3px 0'>
            <Check off $size={11}>Min Max</Check>
            <ManualGrid>
              <label htmlFor='max'>Max</label><Spin w={43} id='max' value='1' />
              <label htmlFor='min'>Min</label><Spin w={43} id='min' value='0' />
              <label htmlFor='y0'>Y0</label><Spin w={43} id='y0' value='0' />
            </ManualGrid>
          </Group>
          <Button $w={69} $h={24} $size={11} $font={sans}>Очистить</Button>
          <Row $gap={9} $pad='1px 0 5px 2px'>
            <label htmlFor='step'>+/-</label>
            <Spin w={43} id='step' value='1' />
          </Row>
          <Row $pad='0 0 0 3px'><Check off $size={11} $font={sans}>Log scale</Check></Row>
        </Column>
      </Column>
    </Row>
  </Window>

/* ---------- correlation report ---------- */

const ReportBody = styled.div`
  display: flex;
  flex: 1;
  margin-right: 2px;
  border-top: 1px solid ${dark};
  border-left: 1px solid ${dark};
  background: #fff;
`

const ReportText = styled.div`
  flex: 1;
  min-width: 0;
  overflow: hidden;
  padding: 4px 0 0;
  line-height: 15px;
  p { margin: 0; white-space: pre; }
`

const ReportTable = styled.table`
  table-layout: fixed;
  width: 693px;
  border-collapse: collapse;
  th { width: 93px; font-weight: normal; text-align: left; }
  th, td { height: 14px; padding: 0; line-height: 14px; }
  tr:first-child td { padding-left: 3px; }
`

const corr = [
  '0.063', '0.063', '0.069', '0.075', '0.079', '0.083', '0.085',
  '0.091', '0.096', '0.102', '0.108', '0.113', '0.1',
]

const ReportWindow = () =>
  <Window $x={591} $y={925} $w={686} $h={99} $gutter>
    <TitleBar $inactive $h={15}>
      <Title>Корреляционный анализ [отчет]</Title>
      <CloseButton $s={11} aria-label='Закрыть'><CloseIcon size={6} /></CloseButton>
    </TitleBar>
    <ReportBody>
      <ReportText>
        <p>{'КФ рядов:   A()  и   B()'}</p>
        <p>Сдвиг (задержка): от 0 до 100</p>
        <ReportTable>
          <tbody>
            <tr><th scope='row'>Сдвиг [J]:</th>{corr.map((_, i) => <td key={i}>{i}</td>)}</tr>
            <tr><th scope='row'>CORR[X,Y]:</th>{corr.map((v, i) => <td key={i}>{v}</td>)}</tr>
          </tbody>
        </ReportTable>
      </ReportText>
      <ScrollBar>
        <ScrollButton aria-label='Вверх'><TriangleUp /></ScrollButton>
        <Bottom>
          <ScrollButton $h={18} aria-label='Ползунок' />
        </Bottom>
        <ScrollButton aria-label='Вниз'><TriangleDown /></ScrollButton>
      </ScrollBar>
    </ReportBody>
  </Window>

const App = () =>
  <Desktop>
    <GlobalStyle />
    <AppTitle as='div'>
      <AppIcon />
      <Title as='h1' $size={12}>Анализ временных рядов - [D:\!MAX\!MyProgs\KURSOV\RealData1.dat]</Title>
    </AppTitle>
    <MenuBar>
      <DataIcon />
      {menus.map(m =>
        <MenuItem key={m}>
          <MenuButton $open={m === 'Анализ'}>{m}</MenuButton>
          {m === 'Анализ' && <Popup>{analysis.map(a => <li key={a}>{a}</li>)}</Popup>}
        </MenuItem>
      )}
    </MenuBar>
    <DataSheet />
    <HarmonicsWindow />
    <SpectrumDialog />
    <StatDialog />
    <IntervalsDialog />
    <ParamsDialog />
    <CorrelationWindow />
    <ReportWindow />
  </Desktop>

export default App
